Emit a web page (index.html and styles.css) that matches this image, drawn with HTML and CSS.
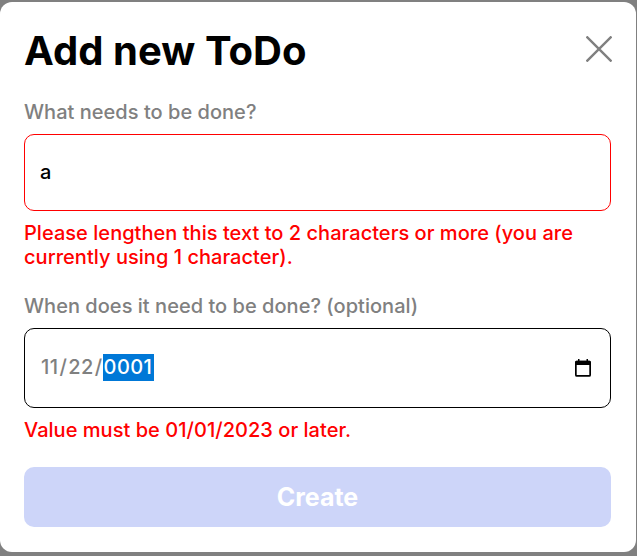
FILE: index.html
```html
<!DOCTYPE html>
<html lang="en">
<head>
<meta charset="utf-8">
<title>Add new ToDo</title>
<link rel="stylesheet" href="styles.css">
</head>
<body>
<main class="dialog">
  <header class="head">
    <h1 class="title">Add new ToDo</h1>
    <svg class="close" width="26" height="26" viewBox="0 0 26 26"><path d="M.5 .5L25.5 25.5M25.5 .5L.5 25.5" fill="none" stroke="#808080" stroke-width="2.4"/></svg>
  </header>
  <form class="form">
    <div class="label">What needs to be done?</div>
    <div class="field field-error">a</div>
    <p class="error">Please lengthen this text to 2 characters or more (you are currently using 1 character).</p>
    <div class="label label-date">When does it need to be done? (optional)</div>
    <div class="field field-date">
      <span class="date"><span class="part">11</span><span>/</span><span class="part">22</span><span>/</span><span class="part selected">0001</span></span>
      <svg class="calendar" width="16" height="18" viewBox="0 0 16 18"><rect x=".85" y="2.5" width="14.3" height="14.4" rx="1" fill="none" stroke="#000" stroke-width="1.7"/><path d="M1 1.7H15L16 3V6H0V3ZM3 0H4.5V3H3ZM11.5 0H13V3H11.5Z"/></svg>
    </div>
    <p class="error">Value must be 01/01/2023 or later.</p>
    <button class="create" type="button" disabled>Create</button>
  </form>
</main>
</body>
</html>
```
FILE: styles.css
```css
* { box-sizing: border-box; }
body {
  margin: 0;
  height: 556px;
  padding: 2px 1px 4px 0;
  overflow: hidden;
  background: #808080;
  font: 450 20px/24px Inter, sans-serif;
}
.dialog {
  height: 550px;
  padding: 24px 25px 25px 24px;
  border-radius: 12px;
  background: #fff;
}
.head { display: flex; justify-content: space-between; height: 50px; }
.title { margin: 0; font-size: 40px; line-height: 50px; font-weight: 700; letter-spacing: 0.05px; }
.close { margin: 10px -0.5px 0 0; }
.form { display: flex; flex-direction: column; }
.label { margin-top: 24px; color: #808080; font-weight: 450; letter-spacing: 0.03px; }
.label-date { margin-top: 25px; }
.field {
  display: flex;
  align-items: center;
  height: 77px;
  margin-top: 10px;
  padding: 0 15px 2px;
  border: 1px solid #000;
  border-radius: 10px;
}
.field-error { border-color: #f00; font-weight: 500; }
.field-date {
  height: 80px;
  padding: 0 19px 1px 15px;
  justify-content: space-between;
  color: #808080;
  font-weight: 500;
}
.date { display: flex; line-height: 27px; letter-spacing: 0.42px; }
.part { padding: 0 1px; }
.selected { width: 51px; background: #0078d7; color: #fff; }
.error { margin: 10px 0 0; color: #f00; font-weight: 500; letter-spacing: 0.035px; }
.create {
  height: 60px;
  margin-top: 25px;
  border: 0;
  border-radius: 10px;
  background: #cdd5f9;
  color: #fff;
  font: 700 25px/30px Inter, sans-serif;
}
```
